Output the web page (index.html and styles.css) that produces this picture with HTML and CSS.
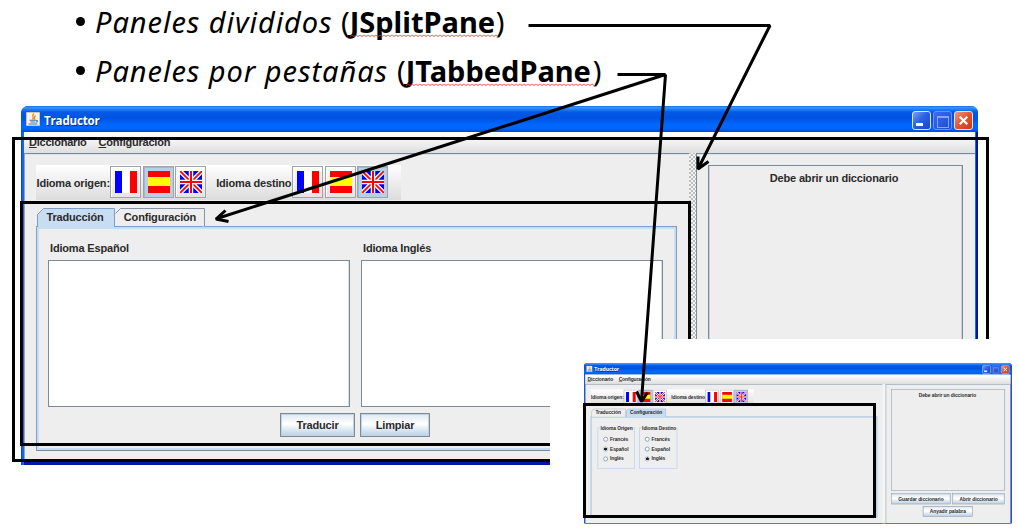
FILE: index.html
```html
<!DOCTYPE html>
<html lang="es">
<head>
<meta charset="utf-8">
<title>Paneles</title>
<link rel="stylesheet" href="styles.css">
</head>
<body>
<svg class="defs" width="0" height="0">
  <symbol id="fr" viewBox="0 0 22 22"><path fill="#00f" d="M0 0h7v22H0z"/><path fill="#fff" d="M7 0h8v22H7z"/><path fill="#f00" d="M15 0h7v22h-7z"/></symbol>
  <symbol id="es" viewBox="0 0 22 22"><path fill="#f00" d="M0 0h22v22H0z"/><path fill="#ff0" d="M0 6h22v9H0z"/></symbol>
  <symbol id="uk" viewBox="0 0 22 22"><path fill="#00f" d="M0 0h22v22H0z"/><path stroke="#fff" stroke-width="4.5" d="M0 0l22 22M22 0L0 22"/><path stroke="#f00" stroke-width="1.8" d="M0 0l22 22M22 0L0 22"/><path stroke="#fff" stroke-width="4.5" d="M11 0v22M0 11h22"/><path stroke="#f00" stroke-width="2" d="M11 0v22M0 11h22"/></symbol>
  <symbol id="java" viewBox="0 0 14 14"><path fill="#f4f3ee" stroke="#c9c7ba" d="M.5.5h13v13H.5z"/><path fill="none" stroke="#e8862e" stroke-width="1.3" d="M8 1.5C4.500 4 9 5 6.500 7.500M9.500 3.500C7.500 5 9.500 6 8 7.500"/><path fill="none" stroke="#4a78a8" stroke-width="1.1" d="M3.500 8.300h6.500M4.500 10h4.500M10 8.300c2.500 0 1.500 2-.5 2M2.500 12h9"/></symbol>
</svg>
<main class="slide">
  <ul class="topics">
    <li><i class="t1">Paneles divididos</i> <span>(<b class="b1">JSplitPane</b>)</span></li>
    <li><i class="t2">Paneles por pestañas</i> <span>(<b class="b2">JTabbedPane</b>)</span></li>
  </ul>

  <section class="window main-window">
    <header class="titlebar"><svg class="java"><use href="#java"/></svg><span class="caption">Traductor</span>
      <span class="ctl min"></span><span class="ctl max"></span><span class="ctl close"><svg viewBox="0 0 18 18"><path d="M5 5l8 8M13 5l-8 8"/></svg></span></header>
    <div class="body">
      <nav class="menubar"><span><u>D</u>iccionario</span><span><u>C</u>onfiguración</span></nav>
      <div class="split">
        <div class="left">
          <div class="toolbar"><span class="lab1">Idioma origen:</span><a><svg><use href="#fr"/></svg></a><a class="on"><svg><use href="#es"/></svg></a><a><svg><use href="#uk"/></svg></a><span class="lab2">Idioma destino</span><a><svg><use href="#fr"/></svg></a><a><svg><use href="#es"/></svg></a><a class="on"><svg><use href="#uk"/></svg></a></div>
          <div class="tabs">
            <div class="tab first"><svg viewBox="0 0 78 19"><path class="sel" d="M.5 19V6.500L6.500.5h71V19"/></svg><span>Traducción</span></div>
            <div class="tab second"><svg viewBox="0 0 90 19"><path class="unsel" d="M.5 5.500l5-5h84V18.500"/></svg><span>Configuración</span></div>
          </div>
          <div class="panel">
            <div class="areas">
              <div><label>Idioma Español</label><div class="area"></div></div>
              <div><label>Idioma Inglés</label><div class="area"></div></div>
            </div>
            <div class="actions"><span class="btn w75">Traducir</span><span class="btn w70">Limpiar</span></div>
          </div>
        </div>
        <div class="divider"></div>
        <div class="right"><div class="dict tall">Debe abrir un diccionario</div></div>
      </div>
    </div>
  </section>

  <div class="frame outer-frame"></div>
  <div class="frame tab-frame"></div>
  <div class="inset"></div>

  <section class="window mini-window">
    <header class="titlebar"><svg class="java"><use href="#java"/></svg><span class="caption">Traductor</span>
      <span class="ctl min"></span><span class="ctl max"></span><span class="ctl close"><svg viewBox="0 0 18 18"><path d="M5 5l8 8M13 5l-8 8"/></svg></span></header>
    <div class="body">
      <nav class="menubar"><span><u>D</u>iccionario</span><span><u>C</u>onfiguración</span></nav>
      <div class="split">
        <div class="left">
          <div class="toolbar"><span class="lab1">Idioma origen:</span><a><svg><use href="#fr"/></svg></a><a class="on"><svg><use href="#es"/></svg></a><a><svg><use href="#uk"/></svg></a><span class="lab2">Idioma destino</span><a><svg><use href="#fr"/></svg></a><a><svg><use href="#es"/></svg></a><a class="on"><svg><use href="#uk"/></svg></a></div>
          <div class="tabs">
            <div class="tab first"><svg viewBox="0 0 78 19"><path class="unsel" d="M.5 18.500V6.500L6.500.5h71V18.500"/></svg><span>Traducción</span></div>
            <div class="tab second"><svg viewBox="0 0 90 19"><path class="sel" d="M.5 19V5.500l5-5h84V19"/></svg><span>Configuración</span></div>
          </div>
          <div class="panel groups">
            <fieldset><legend>Idioma Origen</legend><p><i></i>Francés</p><p><i class="dot"></i>Español</p><p><i></i>Inglés</p></fieldset>
            <fieldset><legend>Idioma Destino</legend><p><i></i>Francés</p><p><i></i>Español</p><p><i class="dot"></i>Inglés</p></fieldset>
          </div>
        </div>
        <div class="divider"></div>
        <div class="right">
          <div class="dict short">Debe abrir un diccionario</div>
          <div class="row"><span class="btn w134">Guardar diccionario</span><span class="btn w117">Abrir diccionario</span></div>
          <div class="row"><span class="btn w112">Anyadir palabra</span></div>
        </div>
      </div>
    </div>
  </section>
  <div class="frame mini-frame"></div>

  <svg class="arrows" width="1019" height="530">
    <defs><pattern id="wave" width="4" height="4" patternUnits="userSpaceOnUse" y="34"><path d="M0 .7l2 2 2-2" fill="none" stroke="#f22" stroke-width=".9"/></pattern>
    <pattern id="wave2" width="4" height="4" patternUnits="userSpaceOnUse" y="83"><path d="M0 .7l2 2 2-2" fill="none" stroke="#f22" stroke-width=".9"/></pattern></defs>
    <path fill="url(#wave)" d="M350 34h148v4H350z"/><path fill="url(#wave2)" d="M406 83h188v4H406z"/>
    <g fill="none" stroke="#000" stroke-width="3" stroke-linejoin="bevel">
      <path d="M528.500 25.500H770L698.500 168"/><path d="M698 156.500V169L708.500 161.500"/>
      <path d="M617.500 74.500H665.500L217 218.500M665.500 74.500L641.500 401"/>
      <path d="M225.500 210.500L216 219L228.500 221.500M636.500 391.500L641.500 401.500L647.500 392.500"/>
    </g>
  </svg>
</main>
</body>
</html>
```

FILE: styles.css
```css
* { box-sizing: border-box; }
body { margin: 0; background: #fff; }
.defs { position: absolute; }
.slide { position: relative; width: 1019px; height: 530px; overflow: hidden; font: bold 11px "Liberation Sans", Arial, sans-serif; letter-spacing: -0.17px; color: #2b2b2b; }

.topics { margin: 0; padding: 0 0 0 76px; list-style: none; font: 29px/49px "Noto Sans", sans-serif; letter-spacing: 0; color: #000; white-space: nowrap; }
.topics li { display: flex; align-items: center; height: 49px; }
.topics li:first-child { margin-top: -3px; }
.topics li::before { content: ""; width: 9px; height: 9px; border-radius: 50%; background: #000; margin-right: 10px; }
.t1, .t2 { letter-spacing: .95px; }
.t1 { width: 246px; }
.t2 { width: 302px; }
.topics span { display: flex; }
.b1 { width: 146px; }
.b2 { width: 187px; }

.window { position: absolute; width: 957px; height: 359px; display: flex; flex-direction: column; border-radius: 7px 7px 0 0; overflow: hidden; background: linear-gradient(90deg, #0a3fd8, #166aee 2px, #166aee 955px, #0018a0 955px); }
.main-window { left: 21px; top: 106px; }
.mini-window { left: 584px; top: 363px; transform: scale(.447); transform-origin: 0 0; }
.titlebar { flex: none; display: flex; align-items: center; height: 26px; padding: 2px 5px 0 5px; background: linear-gradient(#0a54d8 0, #3c96ff 1px, #2583fb 3px, #0459e8 6px, #0053e0 12px, #0068ff 19px, #0065fb 23px, #0347cd 26px); }
.java { width: 14px; height: 14px; margin: 0 4px 2px 0; }
.caption { flex: 1; font: bold 11.5px "Open Sans", sans-serif; letter-spacing: -.15px; color: #fff; text-shadow: 1px 1px #0b2f8f; }
.ctl { position: relative; width: 19px; height: 19px; margin-left: 2px; border: 1px solid #d9e4fb; border-radius: 3px; background: linear-gradient(135deg, #7fa2f3, #2d60e2 45%, #1946cf); }
.min::after { content: ""; position: absolute; left: 3px; top: 11px; width: 7px; height: 3px; background: #fff; }
.max { border-color: #6c92ed; background: linear-gradient(135deg, #3c6cec, #194bd8); }
.max::after { content: ""; position: absolute; left: 3px; top: 4px; width: 10px; height: 9px; border: 1px solid #88a4f0; border-top-width: 2px; }
.close { background: linear-gradient(135deg, #f0987c, #e25430 50%, #c63c13); }
.close svg { display: block; width: 17px; height: 17px; }
.close path { stroke: #fff; stroke-width: 2.2; }
.body { flex: 1; display: flex; flex-direction: column; margin: 0 3px 3px; background: #eee; box-shadow: 0 3px #0019a0, 0 1px #2a5fe0; }
.menubar { flex: none; height: 21px; display: flex; gap: 12px; padding: 2px 5px 0; line-height: 17px; background: linear-gradient(#fff 10%, #dedede); }
.menubar span { letter-spacing: -.22px; }
.split { flex: 1; display: grid; grid-template-columns: 665px 7px 279px; }
.left, .right { border-top: 1px solid #7a8a99; border-left: 1px solid #9aa5b0; padding: 11px; box-shadow: inset 0 1px #dde3e9; }
.right { border-left-color: #7a8a99; }
.divider { background: radial-gradient(circle, #aaa .6px, transparent 1px) 1px 0 / 4px 4px, radial-gradient(circle, #aaa .6px, transparent 1px) 3px 2px / 4px 4px, #f4f4f4; }
.toolbar { display: flex; width: 365px; height: 35px; padding: 1px 0 0 .5px; background: linear-gradient(#fff, #dcdcdc); }
.toolbar span { line-height: 34px; white-space: nowrap; }
.lab1 { width: 73.5px; }
.lab2 { width: 76px; margin-left: 8.4px; }
.toolbar a { width: 31px; height: 32px; margin-right: 1.6px; border: 1px solid #9da3a8; box-shadow: inset 1px 1px #fff; padding: 4px; background: linear-gradient(#fff, #e4e4e4); }
.toolbar a.on { background: #b8cfe5; box-shadow: inset 1px 1px #a3b8cc; }
.toolbar svg { display: block; width: 22px; height: 22px; }
.tabs { display: flex; margin: 8px 0 0 1px; height: 18px; }
.tab { position: relative; height: 19px; text-align: center; line-height: 19px; z-index: 1; }
.tab svg { position: absolute; left: 0; top: 0; width: 100%; height: 19px; }
.tab span { position: relative; }
.first { width: 78px; padding-right: 2px; }
.second { width: 90px; }
.sel { fill: #c8ddf2; stroke: #7f9dc8; }
.unsel { fill: #eee; stroke: #8494a6; }
.panel { width: 641px; height: 225px; padding: 11px 10px 0 11px; border: 1px solid #7f9dc8; border-bottom-color: #7a8a99; box-shadow: inset 0 0 0 2px #c8ddf2; }
.areas { display: grid; grid-template-columns: 302px 302px; gap: 11px; }
.areas label { display: block; height: 22px; padding: 3px 0 0 2px; line-height: 14px; }
.area { height: 147px; background: #fff; border: 1px solid #7a8a99; box-shadow: inset -1px 0 #d5dde5; }
.actions { display: flex; gap: 5px; padding: 6px 0 0 232px; }
.btn { display: block; height: 24px; text-align: center; line-height: 22px; border: 1px solid #7a8a99; box-shadow: inset 0 0 0 1px #c3d2e0; background: linear-gradient(#dde8f3, #fff 45%, #b8cfe5); white-space: nowrap; }
.w75 { width: 75px; }
.w70 { width: 70px; }
.w134 { width: 134px; }
.w117 { width: 117px; }
.w112 { width: 112px; }
.dict { width: 255px; padding: 5px 3px 0 0; border: 1px solid #7a8a99; box-shadow: inset 1px 0 #c9d2db, inset -1px 0 #c9d2db; text-align: center; line-height: 14px; }
.tall { height: 285px; }
.short { height: 227px; margin-bottom: 6px; }
.row { display: flex; justify-content: center; gap: 4px; margin: 0 2px 4px 0; }
.groups { display: flex; gap: 9px; align-items: flex-start; padding: 18px 0 0 14px; }
fieldset { width: 84px; height: 98px; margin: 0; padding: 8px 0 0 11px; border: 2px solid #c5d8ec; }
fieldset legend { margin-left: -7px; padding: 0 1px; white-space: nowrap; }
fieldset p { display: flex; align-items: center; gap: 4px; height: 22px; margin: 0; }
fieldset i { width: 11px; height: 11px; border: 2px solid #7a9ac0; border-radius: 50%; background: #fff; }
fieldset .dot { border-width: 1px; background: radial-gradient(circle, #222 3px, #dce8f4 3.6px); }

.frame { position: absolute; border: 3px solid #000; }
.outer-frame { left: 12px; top: 137px; width: 977px; height: 325px; }
.tab-frame { left: 20px; top: 201px; width: 671px; height: 245px; }
.inset { position: absolute; left: 550px; top: 339px; width: 469px; height: 191px; background: #fff; }
.mini-frame { left: 583px; top: 403px; width: 293px; height: 115px; }
.arrows { position: absolute; left: 0; top: 0; }
```
